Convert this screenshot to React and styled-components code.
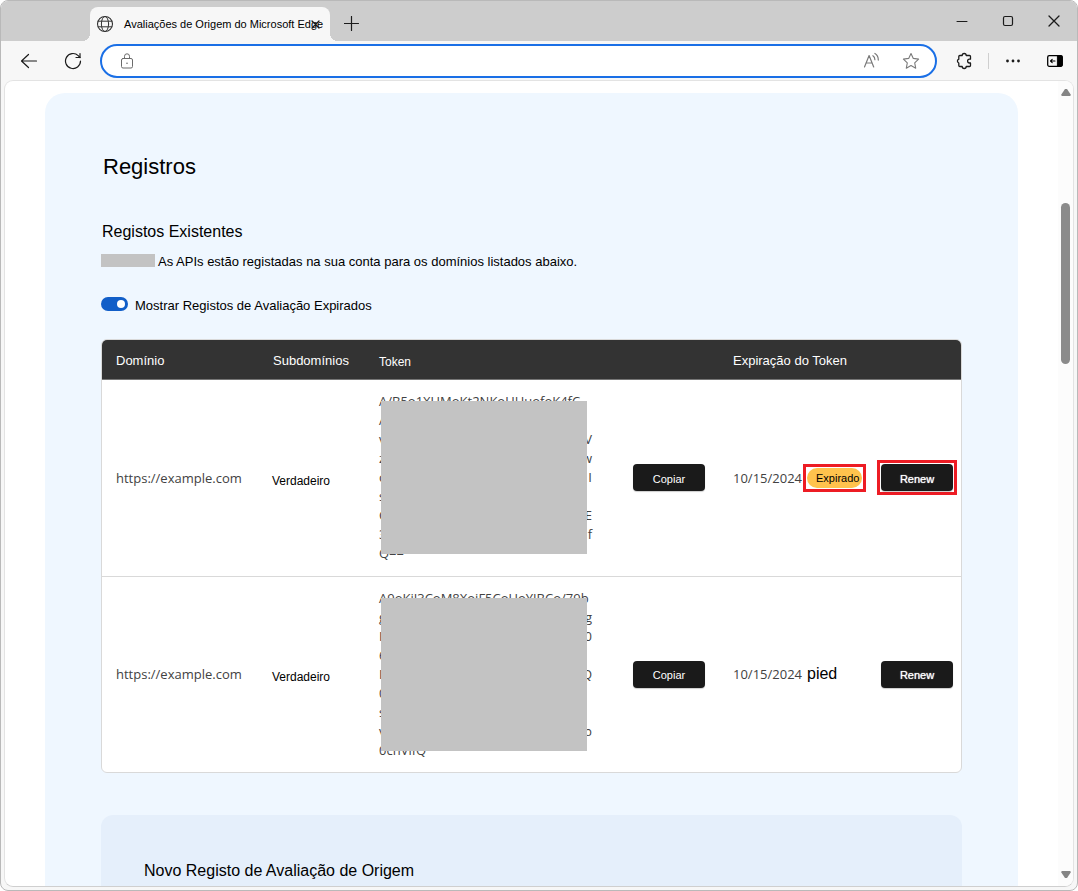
import React, { useState } from 'react';
import styled, { createGlobalStyle } from 'styled-components';

const GlobalStyle = createGlobalStyle`
  * {
    box-sizing: border-box;
  }
  body {
    margin: 0;
    background: #fff;
    font-family: 'Liberation Sans', Arial, sans-serif;
    color: #000;
  }
  h1, h2, p {
    margin: 0;
    font-weight: 400;
  }
  button {
    font-family: 'Liberation Sans', Arial, sans-serif;
    cursor: pointer;
  }
  svg {
    flex-shrink: 0;
  }
`;

// Browser window
const BrowserWindow = styled.div`
  display: flex;
  flex-direction: column;
  height: 100vh;
  overflow: hidden;
  border: 1px solid #b9b9b9;
  border-radius: 8px;
  background: #f7f7f7;
`;

const TitleBar = styled.header`
  display: flex;
  align-items: flex-end;
  height: 40px;
  flex-shrink: 0;
  padding-left: 89px;
  background: #cdcdcd;
`;

const Tab = styled.div`
  position: relative;
  display: flex;
  align-items: center;
  gap: 10px;
  width: 240px;
  height: 34px;
  padding: 0 2px 0 6px;
  border-radius: 8px 8px 0 0;
  background: #f7f7f7;
  font-size: 11px;
  white-space: nowrap;

  &::before,
  &::after {
    content: '';
    position: absolute;
    bottom: 0;
    width: 8px;
    height: 8px;
  }
  &::before {
    left: -8px;
    background: radial-gradient(circle at 0 0, transparent 8px, #f7f7f7 8px);
  }
  &::after {
    right: -8px;
    background: radial-gradient(circle at 100% 0, transparent 8px, #f7f7f7 8px);
  }
`;

const TabTitle = styled.span`
  min-width: 0;
`;

const IconButton = styled.button`
  display: flex;
  align-items: center;
  justify-content: center;
  flex-shrink: 0;
  width: ${(props) => props.$width || 44}px;
  height: 34px;
  padding: 0;
  border: none;
  background: transparent;
  color: ${(props) => props.$color || '#1b1b1b'};
`;

const TabClose = styled(IconButton)`
  position: absolute;
  right: 8px;
  top: 0;
`;

const WindowControls = styled.div`
  display: flex;
  align-self: center;
  margin-left: auto;
`;

const Toolbar = styled.nav`
  display: flex;
  align-items: center;
  height: 39px;
  flex-shrink: 0;
  padding: 0 4px 0 6px;
`;

const AddressBar = styled.div`
  display: flex;
  align-items: center;
  flex: 1;
  height: 34px;
  margin: 0 3px 0 5px;
  padding: 0 4px 0 17px;
  border: 2px solid #1a6fe6;
  border-radius: 17px;
  background: #fff;
  color: #6b6b6b;
`;

const AddressInput = styled.input`
  flex: 1;
  min-width: 0;
  height: 28px;
  margin-left: 8px;
  border: none;
  outline: none;
  background: transparent;
  font-size: 14px;
`;

const Divider = styled.span`
  width: 1px;
  height: 16px;
  background: #cfcfcf;
`;

const Viewport = styled.div`
  display: flex;
  flex: 1;
  min-height: 0;
  margin: 0 3px 3px;
  overflow: hidden;
  border: 1px solid #e3e3e3;
  border-bottom-color: #cfcfcf;
  border-radius: 9px;
  background: #fff;
`;

const Page = styled.main`
  flex: 1;
  min-width: 0;
  overflow: hidden;
  padding: 12px 40px 0;
`;

const ScrollBar = styled.div`
  display: flex;
  flex-direction: column;
  align-items: center;
  width: 15px;
  padding: 7px 0;
  background: #fcfcfc;
`;

const ScrollThumb = styled.div`
  width: 9px;
  height: 161px;
  margin: 107px 0 auto;
  border-radius: 5px;
  background: #8b8b8b;
`;

// Page content
const Panel = styled.section`
  padding: 60px 56px;
  border-radius: 20px;
  background: #eff7ff;
`;

const PageTitle = styled.h1`
  padding-left: 2px;
  font-size: 22px;
  line-height: 28px;
`;

const SectionTitle = styled.h2`
  font-size: 16px;
  line-height: 24px;
`;

const ExistingTitle = styled(SectionTitle)`
  margin-top: 39px;
  padding-left: 1px;
`;

const Description = styled.p`
  display: flex;
  gap: 3px;
  margin-top: 8px;
  font-size: 13px;
  line-height: 20px;
`;

const Redacted = styled.span`
  width: 54px;
  height: 13px;
  margin-top: 2px;
  background: #c3c3c3;
`;

const SwitchLabel = styled.label`
  display: flex;
  gap: 7px;
  width: fit-content;
  margin-top: 24px;
  font-size: 13px;
  line-height: 20px;
`;

const Switch = styled.input`
  appearance: none;
  display: flex;
  align-items: center;
  justify-content: ${(props) => (props.checked ? 'flex-end' : 'flex-start')};
  width: 27px;
  height: 14px;
  margin: 1px 0 0;
  padding: 0 3px;
  border-radius: 7px;
  background: ${(props) => (props.checked ? '#115ec8' : '#8b8b8b')};

  &::before {
    content: '';
    width: 8px;
    height: 8px;
    border-radius: 50%;
    background: #fff;
  }
`;

const TableFrame = styled.div`
  margin-top: 23px;
  overflow: hidden;
  border: 1px solid #d9d9d9;
  border-radius: 6px;
  background: #fff;
`;

const Table = styled.table`
  width: 100%;
  table-layout: fixed;
  border-collapse: separate;
  border-spacing: 0;
`;

const Col = styled.col`
  width: ${(props) => props.$width}px;
`;

const HeadCell = styled.th`
  height: 40px;
  padding: ${(props) => (props.$small ? 4 : 2)}px 0 0 14px;
  border-bottom: 1px solid #767676;
  background: #333;
  color: #fff;
  font-size: ${(props) => (props.$small ? 12 : 13)}px;
  font-weight: 400;
  text-align: left;
  white-space: nowrap;
`;

const Row = styled.tr`
  height: 196px;

  & + & td {
    border-top: 1px solid #d9d9d9;
  }
`;

const Cell = styled.td`
  padding: 0 0 1px 14px;
  color: #424242;
  font-family: 'Open Sans', 'Noto Sans', sans-serif;
  font-size: 13px;
  white-space: nowrap;
`;

const PlainCell = styled(Cell)`
  padding: 5px 0 0 13px;
  color: #000;
  font-family: 'Liberation Sans', Arial, sans-serif;
  font-size: 12px;
`;

const Token = styled.div`
  position: relative;
  width: 213px;
  line-height: 19px;
`;

const TokenLine = styled.div`
  display: flex;
  justify-content: space-between;
  height: 19px;
`;

const TokenMask = styled.div`
  position: absolute;
  inset: 9px 5px 9px 2px;
  background: #c3c3c3;
`;

const ActionButton = styled.button`
  display: block;
  width: 72px;
  height: 27px;
  padding: 2px 0 0;
  border: none;
  border-radius: 4px;
  background: #1a1a1a;
  color: #fff;
  font-size: 11px;
  text-shadow: ${(props) => (props.$strong ? '0 0 1px #fff' : 'none')};
  box-shadow: 0 1px 1px rgba(0, 0, 0, 0.2);
`;

const ButtonMark = styled.div`
  width: fit-content;
  margin: -4px;
  padding: 1px;
  border: 3px solid ${(props) => (props.$marked ? '#ed1c24' : 'transparent')};
`;

const Expiry = styled.div`
  display: flex;
  align-items: center;
  justify-content: space-between;
  padding-right: 1px;
`;

const BadgeMark = styled.span`
  padding: 1px;
  border: 3px solid #ed1c24;
`;

const Badge = styled.span`
  display: block;
  width: 55px;
  padding-left: 9px;
  border-radius: 10px;
  background: #ffc34d;
  color: #000;
  font-family: 'Liberation Sans', Arial, sans-serif;
  font-size: 11px;
  line-height: 20px;
`;

const StatusText = styled.span`
  width: 59px;
  color: #000;
  font-family: 'Liberation Sans', Arial, sans-serif;
  font-size: 16px;
`;

const NewRegistration = styled.section`
  margin-top: 42px;
  padding: 44px 43px;
  border-radius: 12px;
  background: #e5effb;
`;

const Icon = ({ size = 16, children }) => (
  <svg
    width={size}
    height={size}
    viewBox={`0 0 ${size} ${size}`}
    fill="none"
    stroke="currentColor"
    strokeWidth="1"
    strokeLinecap="round"
    strokeLinejoin="round"
    aria-hidden="true"
  >
    {children}
  </svg>
);

const GlobeIcon = () => (
  <Icon size={18}>
    <g stroke="#333">
      <circle cx="9" cy="9" r="7.5" strokeWidth="1.1" />
      <ellipse cx="9" cy="9" rx="3.6" ry="7.5" />
      <path d="M2.2 6.2h13.6M2.2 11.8h13.6" />
    </g>
  </Icon>
);

const BackIcon = () => (
  <Icon size={18}>
    <path d="M16.5 9H1.5M8.5 2.5L1.5 9l7 6.5" strokeWidth="1.2" />
  </Icon>
);

const ReloadIcon = () => (
  <Icon size={18}>
    <path d="M16.5 9a7.5 7.5 0 1 1-2.3-5.4L16 5.5" strokeWidth="1.2" />
    <path d="M16 1.5v4h-4" strokeWidth="1.2" />
  </Icon>
);

const LockIcon = () => (
  <Icon>
    <rect x="2.5" y="5.5" width="11" height="9.5" rx="1.5" />
    <path d="M5.5 5.5V3.3a2.5 2.5 0 0 1 5 0v2.2" />
    <circle cx="8" cy="10.2" r="0.8" fill="currentColor" stroke="none" />
  </Icon>
);

const ReadAloudIcon = () => (
  <Icon size={18}>
    <path d="M2.5 15L7.1 3.5 11.7 15M4.1 11h6" strokeWidth="1.2" />
    <path d="M10.9 3.7q2 1.2 2 4M12.9 1.5q3.4 2 3.4 6.6" strokeWidth="1.2" />
  </Icon>
);

const StarIcon = () => (
  <Icon size={18}>
    <path d="M9 1.5l2.3 4.9 5.3.7-3.9 3.7 1 5.4L9 13.6l-4.7 2.6 1-5.4L1.4 7.1l5.3-.7z" strokeWidth="1.1" />
  </Icon>
);

const PuzzleIcon = () => (
  <Icon size={18}>
    <path
      d="M4.8 3.5h2.4a2 2 0 0 1 4 0h3.3a1 1 0 0 1 1 1v2.7h-1a1.9 1.9 0 0 0 0 3.8h1v2.5a1 1 0 0 1-1 1h-3.3a2 2 0 0 1-4 0H4.8a1 1 0 0 1-1-1V11a2 2 0 0 1 0-3.8V4.5a1 1 0 0 1 1-1z"
      strokeWidth="1.3"
    />
  </Icon>
);

const DotsIcon = () => (
  <Icon>
    <g fill="currentColor" stroke="none">
      <circle cx="2.5" cy="8" r="1.4" />
      <circle cx="8" cy="8" r="1.4" />
      <circle cx="13.5" cy="8" r="1.4" />
    </g>
  </Icon>
);

const SidebarIcon = () => (
  <Icon>
    <rect x="0.7" y="2.7" width="14.6" height="10.6" rx="1.5" strokeWidth="1.3" />
    <path d="M10.8 3h4.2v10h-4.2z" fill="currentColor" />
    <path d="M8 8H3.5M5.2 6.4L3.5 8l1.7 1.6" strokeWidth="1.1" />
  </Icon>
);

const PlusIcon = () => (
  <Icon>
    <path d="M7.5 .5v14M.5 7.5h14" strokeWidth="1.2" />
  </Icon>
);

const CloseIcon = ({ size = 12 }) => (
  <Icon size={size}>
    <path d={`M1 1L${size - 1} ${size - 1}M${size - 1} 1L1 ${size - 1}`} strokeWidth="1.3" />
  </Icon>
);

const MinimizeIcon = () => (
  <Icon size={12}>
    <path d="M1 6.5h10" />
  </Icon>
);

const MaximizeIcon = () => (
  <Icon size={12}>
    <rect x="1.5" y="1.5" width="9" height="9" rx="1.5" strokeWidth="1.2" />
  </Icon>
);

const Arrow = ({ down }) => (
  <svg width="10" height="8" viewBox="0 0 10 8" fill="#858585" aria-hidden="true">
    <path d={down ? 'M1 0h8l1 1-4 6H4L0 1z' : 'M1 8h8l1-1-4-6H4L0 7z'} />
  </svg>
);

// First and last visible pieces of each token line
const registrations = [
  {
    id: 1,
    domain: 'https://example.com',
    subdomains: 'Verdadeiro',
    date: '10/15/2024',
    expired: true,
    token: [
      ['A/B5o1XUMoKt2NKoUHuofoK4fC'],
      ['A'],
      ['v', 'V'],
      ['z', 'w'],
      ['c', 'I'],
      ['s'],
      ['C', 'E'],
      ['3', 'f'],
      ['Q=='],
    ],
  },
  {
    id: 2,
    domain: 'https://example.com',
    subdomains: 'Verdadeiro',
    date: '10/15/2024',
    expired: false,
    token: [
      ['A9oKjJ3CoM8XojF5CoUoYJBCo/79b'],
      ['g', 'g'],
      ['I', '0'],
      ['6'],
      ['I', 'Q'],
      ['0'],
      ['s'],
      ['v', 'b'],
      ['0cnVlfQ'],
    ],
  },
];

const Registration = ({ item }) => (
  <Row>
    <Cell>{item.domain}</Cell>
    <PlainCell>{item.subdomains}</PlainCell>
    <Cell>
      <Token>
        {item.token.map((line, i) => (
          <TokenLine key={i}>
            {line.map((part, j) => (
              <span key={j}>{part}</span>
            ))}
          </TokenLine>
        ))}
        <TokenMask />
      </Token>
    </Cell>
    <Cell>
      <ActionButton>Copiar</ActionButton>
    </Cell>
    <Cell>
      <Expiry>
        {item.date}
        {item.expired ? (
          <BadgeMark>
            <Badge>Expirado</Badge>
          </BadgeMark>
        ) : (
          <StatusText>pied</StatusText>
        )}
      </Expiry>
    </Cell>
    <Cell>
      <ButtonMark $marked={item.expired}>
        <ActionButton $strong>Renew</ActionButton>
      </ButtonMark>
    </Cell>
  </Row>
);

export default function App() {
  const [showExpired, setShowExpired] = useState(true);

  return (
    <>
      <GlobalStyle />
      <BrowserWindow>
        <TitleBar>
          <Tab>
            <GlobeIcon />
            <TabTitle>Avaliações de Origem do Microsoft Edge</TabTitle>
            <TabClose $width={14} aria-label="Fechar guia">
              <CloseIcon size={9} />
            </TabClose>
          </Tab>
          <IconButton aria-label="Nova guia">
            <PlusIcon />
          </IconButton>
          <WindowControls>
            <IconButton $width={46} aria-label="Minimizar">
              <MinimizeIcon />
            </IconButton>
            <IconButton $width={46} aria-label="Maximizar">
              <MaximizeIcon />
            </IconButton>
            <IconButton $width={46} aria-label="Fechar">
              <CloseIcon />
            </IconButton>
          </WindowControls>
        </TitleBar>

        <Toolbar>
          <IconButton aria-label="Voltar">
            <BackIcon />
          </IconButton>
          <IconButton aria-label="Atualizar">
            <ReloadIcon />
          </IconButton>
          <AddressBar>
            <LockIcon />
            <AddressInput type="text" aria-label="Endereço" />
            <IconButton $width={40} $color="#7a7a7a" aria-label="Ler em voz alta">
              <ReadAloudIcon />
            </IconButton>
            <IconButton $width={40} $color="#7a7a7a" aria-label="Favoritos">
              <StarIcon />
            </IconButton>
          </AddressBar>
          <IconButton $width={48} aria-label="Extensões">
            <PuzzleIcon />
          </IconButton>
          <Divider />
          <IconButton $width={48} aria-label="Mais">
            <DotsIcon />
          </IconButton>
          <IconButton $width={36} $color="#000" aria-label="Barra lateral">
            <SidebarIcon />
          </IconButton>
        </Toolbar>

        <Viewport>
          <Page>
            <Panel>
              <PageTitle>Registros</PageTitle>
              <ExistingTitle>Registos Existentes</ExistingTitle>
              <Description>
                <Redacted />
                As APIs estão registadas na sua conta para os domínios listados abaixo.
              </Description>
              <SwitchLabel>
                <Switch
                  type="checkbox"
                  checked={showExpired}
                  onChange={(e) => setShowExpired(e.target.checked)}
                />
                Mostrar Registos de Avaliação Expirados
              </SwitchLabel>

              <TableFrame>
                <Table>
                  <colgroup>
                    <Col $width={157} />
                    <Col $width={106} />
                    <Col $width={254} />
                    <Col $width={100} />
                    <Col $width={148} />
                    <Col $width={94} />
                  </colgroup>
                  <thead>
                    <tr>
                      <HeadCell>Domínio</HeadCell>
                      <HeadCell>Subdomínios</HeadCell>
                      <HeadCell $small>Token</HeadCell>
                      <HeadCell />
                      <HeadCell>Expiração do Token</HeadCell>
                      <HeadCell />
                    </tr>
                  </thead>
                  <tbody>
                    {registrations.map((item) => (
                      <Registration key={item.id} item={item} />
                    ))}
                  </tbody>
                </Table>
              </TableFrame>

              <NewRegistration>
                <SectionTitle>Novo Registo de Avaliação de Origem</SectionTitle>
              </NewRegistration>
            </Panel>
          </Page>
          <ScrollBar>
            <Arrow />
            <ScrollThumb />
            <Arrow down />
          </ScrollBar>
        </Viewport>
      </BrowserWindow>
    </>
  );
}
